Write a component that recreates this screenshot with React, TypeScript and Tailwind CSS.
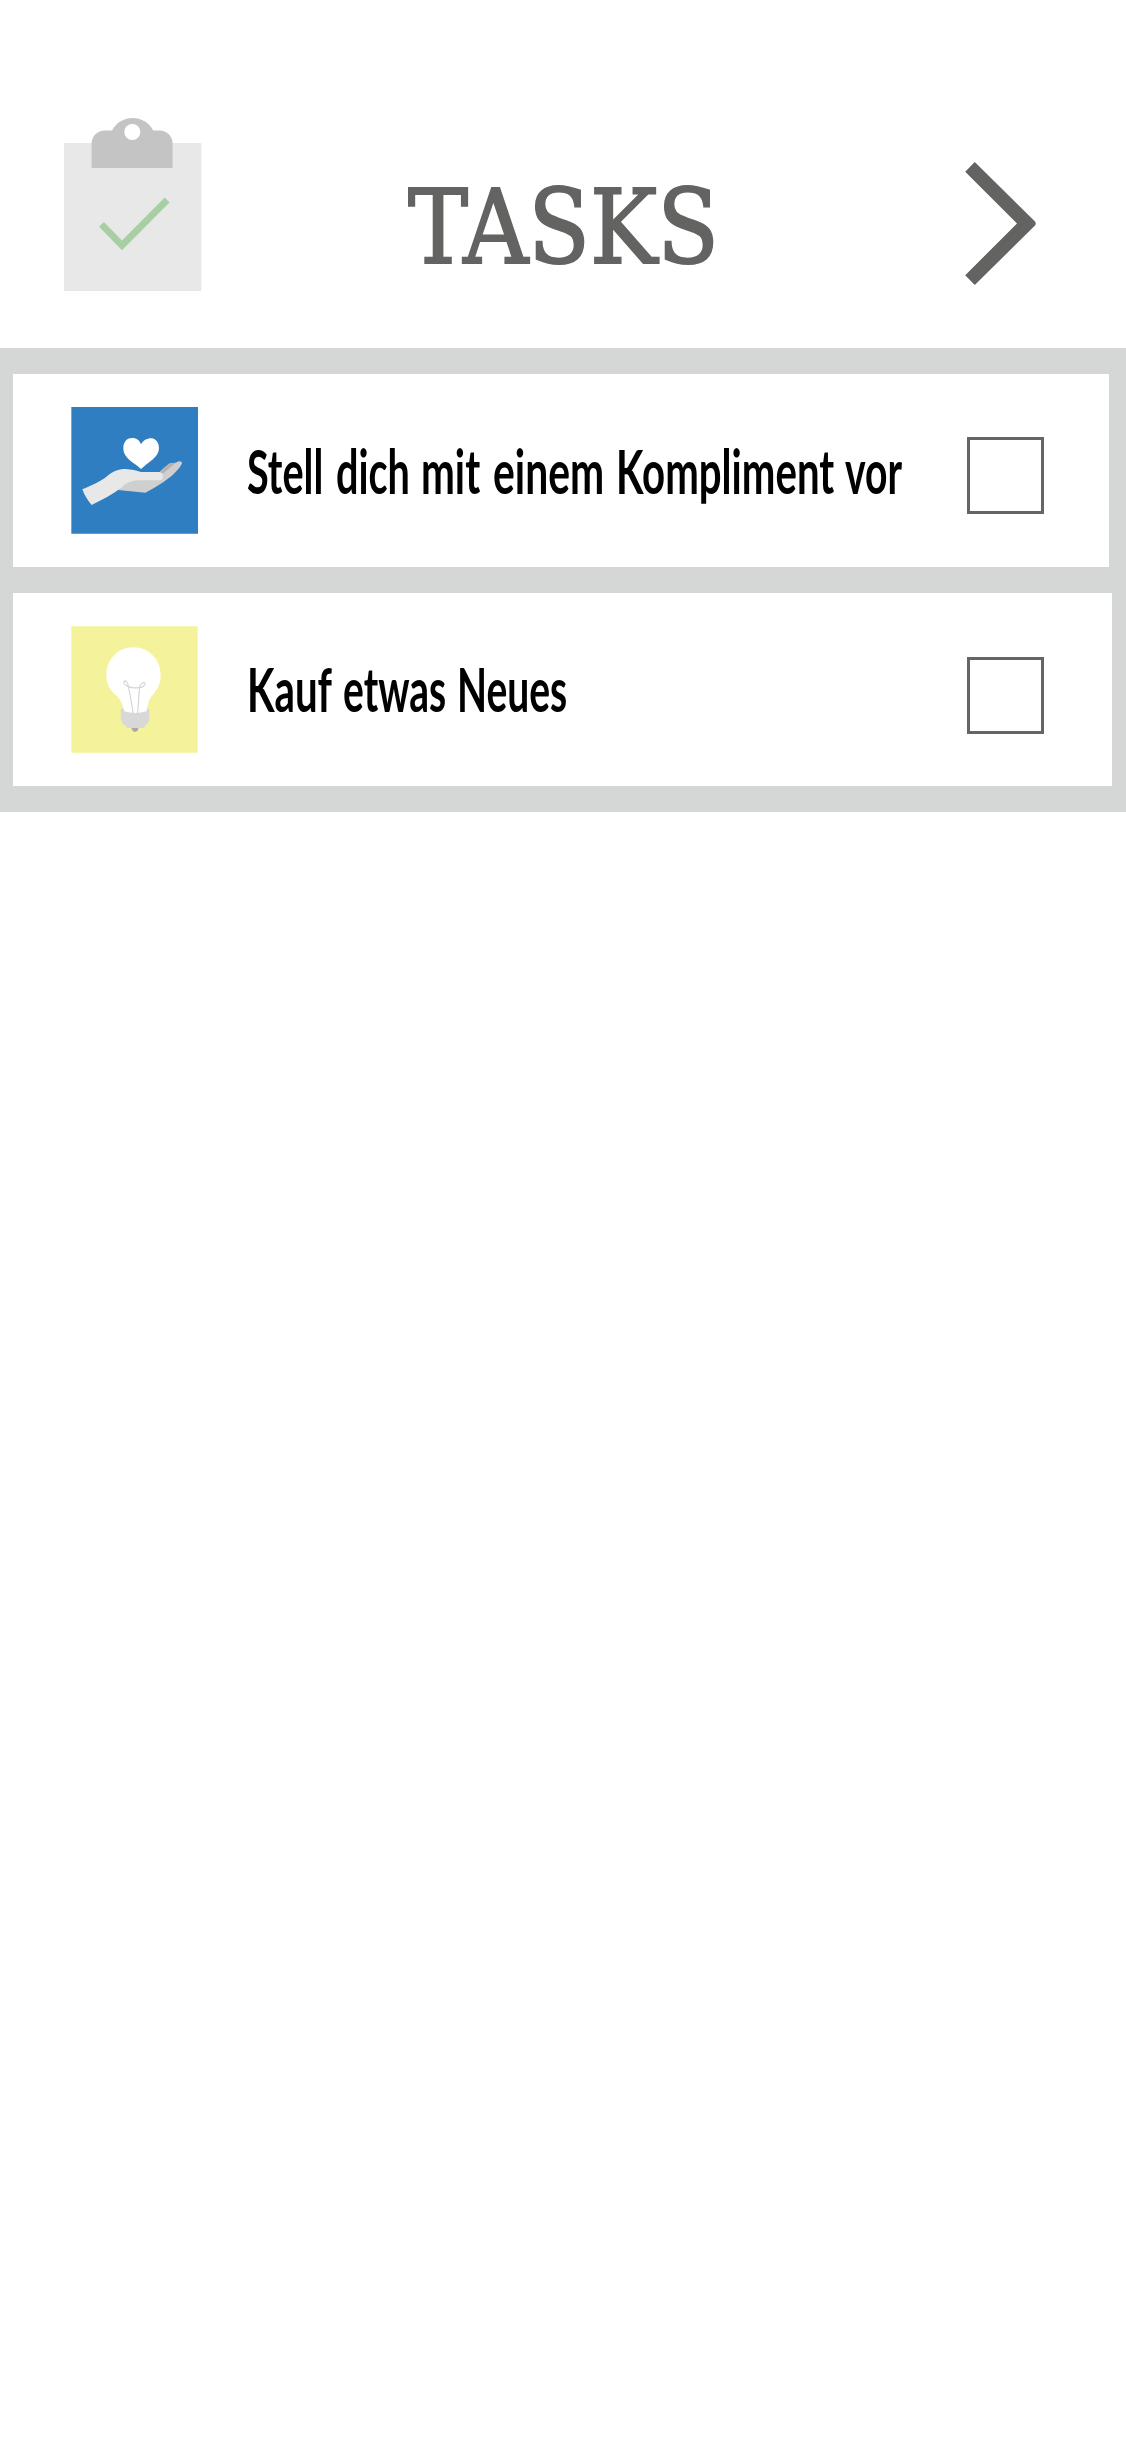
import { useLayoutEffect, useRef, useState, type ReactNode } from 'react';

/** Condenses a word horizontally so that it fills the width of its box. */
function FitText({ children, className }: { children: ReactNode; className: string }) {
  const box = useRef<HTMLSpanElement>(null);
  const text = useRef<HTMLSpanElement>(null);
  const [scale, setScale] = useState(1);

  useLayoutEffect(() => {
    if (box.current && text.current) {
      setScale(box.current.offsetWidth / text.current.offsetWidth);
    }
  }, []);

  return (
    <span ref={box} className={`block shrink-0 whitespace-nowrap ${className}`}>
      <span ref={text} className="inline-block origin-left" style={{ transform: `scaleX(${scale})` }}>
        {children}
      </span>
    </span>
  );
}

function Clipboard() {
  return (
    <svg className="mt-[117px] h-[175px] w-[138px]" viewBox="63.7 117 138 175" aria-hidden="true">
      <path d="M63.7 143H201v148H63.7z" fill="#e8e8e8" />
      <path
        d="M91.3 168v-24.5a13 13 0 0 1 13-13h7.5a23 23 0 0 1 41 0h6.500a13 13 0 0 1 13 13V168z"
        fill="#c4c4c4"
      />
      <circle cx="132" cy="132" r="8" fill="#fff" />
      <path d="M101.200 224.300 121.700 245.300 166.800 200" fill="none" stroke="#a8cfa3" strokeWidth="6.800" />
    </svg>
  );
}

function Chevron() {
  return (
    <svg className="mt-[161px] h-[125px] w-[72px]" viewBox="965 161 72 125" aria-hidden="true">
      <path
        d="M974.800 162 1035 221.500Q1036.500 223.500 1035 225.500L974.800 285 965.200 275.300 1017 223.400 965.200 171.700z"
        fill="#636362"
      />
    </svg>
  );
}

function HandIcon() {
  return (
    <svg className="h-[127px] w-[127px]" viewBox="33 20 381 381" aria-hidden="true">
      <path d="M34 20h380v380H34z" fill="#2e7ec1" />
      <path
        d="M243 206C224 187 190 174 190 145C190 122 202 113 217 113C230 113 239 120 243 132C249 121 260 114 274 114C289 115 297 128 297 145C296 171 263 186 243 206Z"
        fill="#fff"
      />
      <path
        d="M174 269 256 277C280 265 321 240 341 221C355 208 363 198 366 189C366 183 360 181 353 184L347 187 331 188C324 192 307 206 298 216L224 222Z"
        fill="#cfcfcf"
      />
      <path d="M298 217C310 205 322 193 331 188L347 188 308 220Z" fill="#b7b2ae" />
      <path
        d="M67 267C92 257 122 244 141 228C158 213 176 206 196 206C215 207 230 211 243 215H297C306 216 310 222 309 230C308 237 304 240 297 240H239C213 240 198 249 184 262C158 282 126 298 95 314C82 299 73 284 67 267Z"
        fill="#e8e8e8"
      />
    </svg>
  );
}

function BulbIcon() {
  return (
    <svg className="h-[127px] w-[127px]" viewBox="35 33 381 381" aria-hidden="true">
      <path d="M36 34h379v379H36z" fill="#f4f29a" />
      <path d="M215 338h23l-3 8q-8 10-16 0z" fill="#aaa9a7" />
      <path
        d="M190 280h74l6 4v10l-2 5 2 6v9l-3 4q2 8-9 11-1 10-9 10h-42q-9 0-9-9-12-3-11-13l-3-5v-9l2-5-2-6v-9z"
        fill="#d8d8d8"
      />
      <path
        d="M222 97C268 97 304 133 304 180C304 211 291 227 278 243C266 257 266 271 261 289Q228 299 195 289C189 269 187 257 170 241C151 223 141 209 141 180C141 133 177 97 222 97Z"
        fill="#fff"
      />
      <path
        d="M221 294C218 266 212 240 207 215C198 212 191 204 194 199C199 194 206 202 207 215Q224 221 241 217C244 207 252 200 257 204C259 211 249 218 241 217C238 243 237 269 235 294"
        fill="none"
        stroke="#d5d5d5"
        strokeWidth="3.500"
      />
    </svg>
  );
}

function Checkbox({ label, className }: { label: string; className: string }) {
  return (
    <button
      type="button"
      role="checkbox"
      aria-checked="false"
      aria-label={label}
      className={`ml-auto size-[77px] shrink-0 border-[3px] border-[#656564] bg-white ${className}`}
    />
  );
}

export default function App() {
  return (
    <main className="min-h-[2437px] w-full bg-white">
      <header className="flex h-[348px] items-start pr-[89px] pl-[64px]">
        <Clipboard />
        <h1 className="mt-[168px] ml-[206px] flex font-['DejaVu_Serif',serif] text-[102px] leading-[120px] text-[#636362] [-webkit-text-stroke:2px_#636362]">
          <FitText className="w-[311px]">TASKS</FitText>
        </h1>
        <div className="ml-auto">
          <Chevron />
        </div>
      </header>

      <section className="flex flex-col gap-[26px] bg-[#d5d7d6] pt-[26px] pr-[14px] pb-[26px] pl-[13px]">
        <article className="mr-[3px] flex h-[193px] items-start bg-white pr-[65px] pl-[58px]">
          <div className="mt-[33px] shrink-0">
            <HandIcon />
          </div>
          <p className="mt-[61px] ml-[49px] flex font-['Lato',sans-serif] text-[61px] leading-[72px] font-bold text-black">
            <FitText className="mr-[13px] w-[76px]">Stell</FitText>
            <FitText className="mr-[11px] w-[74px]">dich</FitText>
            <FitText className="mr-[13px] w-[59px]">mit</FitText>
            <FitText className="mr-[12px] w-[111px]">einem</FitText>
            <FitText className="mr-[11px] w-[218px]">Kompliment</FitText>
            <FitText className="w-[57px]">vor</FitText>
          </p>
          <Checkbox label="Stell dich mit einem Kompliment vor" className="mt-[63px]" />
        </article>

        <article className="flex h-[193px] items-start bg-white pr-[68px] pl-[58px]">
          <div className="mt-[33px] shrink-0">
            <BulbIcon />
          </div>
          <p className="mt-[60px] ml-[49px] flex font-['Lato',sans-serif] text-[61px] leading-[72px] font-bold text-black">
            <FitText className="mr-[11px] w-[85px]">Kauf</FitText>
            <FitText className="mr-[11px] w-[103px]">etwas</FitText>
            <FitText className="w-[110px]">Neues</FitText>
          </p>
          <Checkbox label="Kauf etwas Neues" className="mt-[64px]" />
        </article>
      </section>
    </main>
  );
}
